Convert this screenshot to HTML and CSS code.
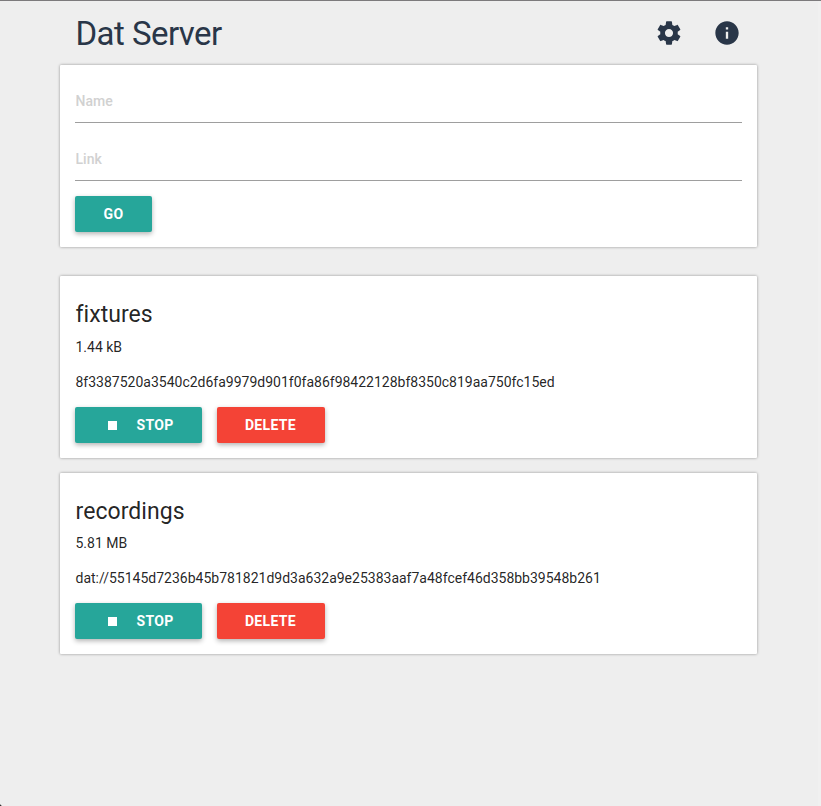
FILE: index.html
```html
<!DOCTYPE html>
<html lang="en">
<head>
<meta charset="utf-8">
<title>Dat Server</title>
<link rel="stylesheet" href="styles.css">
</head>
<body>
<div class="container">
  <header class="header">
    <h1>Dat Server</h1>
    <nav class="nav">
      <svg class="icon" viewBox="0 0 24 24"><path d="M19.43 12.98c.04-.32.07-.64.07-.98s-.03-.66-.07-.98l2.11-1.65c.19-.15.24-.42.12-.64l-2-3.46c-.12-.22-.39-.3-.61-.22l-2.49 1c-.52-.4-1.08-.73-1.69-.98l-.38-2.65C14.46 2.18 14.25 2 14 2h-4c-.25 0-.46.18-.49.42l-.38 2.65c-.61.25-1.17.59-1.69.98l-2.49-1c-.23-.09-.49 0-.61.22l-2 3.46c-.13.22-.07.49.12.64l2.11 1.65c-.04.32-.07.65-.07.98s.03.66.07.98l-2.11 1.65c-.19.15-.24.42-.12.64l2 3.46c.12.22.39.3.61.22l2.49-1c.52.4 1.08.73 1.69.98l.38 2.65c.03.24.24.42.49.42h4c.25 0 .46-.18.49-.42l.38-2.65c.61-.25 1.17-.59 1.69-.98l2.49 1c.23.09.49 0 .61-.22l2-3.46c.12-.22.07-.49-.12-.64l-2.11-1.65zM12 15.5c-1.93 0-3.5-1.57-3.5-3.5s1.57-3.5 3.5-3.5 3.5 1.57 3.5 3.5-1.57 3.5-3.5 3.5z"/></svg>
      <svg class="icon" viewBox="0 0 24 24"><path d="M12 2C6.48 2 2 6.48 2 12s4.48 10 10 10 10-4.48 10-10S17.52 2 12 2zm1 15h-2v-6h2v6zm0-8h-2V7h2v2z"/></svg>
    </nav>
  </header>
  <form class="card form">
    <input class="field" type="text" placeholder="Name">
    <input class="field" type="text" placeholder="Link">
    <button class="btn go" type="button">Go</button>
  </form>
  <section class="card dat">
    <h2>fixtures</h2>
    <p class="size">1.44 kB</p>
    <p class="link">8f3387520a3540c2d6fa9979d901f0fa86f98422128bf8350c819aa750fc15ed</p>
    <div class="actions">
      <button class="btn stop" type="button"><span class="square"></span>Stop</button>
      <button class="btn delete" type="button">Delete</button>
    </div>
  </section>
  <section class="card dat second">
    <h2>recordings</h2>
    <p class="size">5.81 MB</p>
    <p class="link">dat://55145d7236b45b781821d9d3a632a9e25383aaf7a48fcef46d358bb39548b261</p>
    <div class="actions">
      <button class="btn stop" type="button"><span class="square"></span>Stop</button>
      <button class="btn delete" type="button">Delete</button>
    </div>
  </section>
</div>
</body>
</html>
```
FILE: styles.css
```css
* { box-sizing: border-box; }
body {
  margin: 0;
  min-height: 806px;
  background: radial-gradient(circle at 0 100%, #333 0.8px, transparent 2px), linear-gradient(to left, #f0f0f0 3px, #eee 3px);
  border-top: 1px solid #7c7a7c;
  font-family: Roboto, sans-serif;
  font-size: 14px;
  color: rgba(0, 0, 0, 0.87);
}
.container { width: 697px; margin-left: 60px; }
.header {
  display: flex;
  justify-content: space-between;
  height: 64px;
  padding: 0 16px 0 15.5px;
  color: #293648;
}
h1 { margin: 0; font-size: 33px; font-weight: 400; line-height: 66px; letter-spacing: -0.55px; }
.nav { display: flex; gap: 30px; padding-top: 18px; }
.icon { width: 28px; height: 28px; fill: currentColor; }
.card {
  background: #fff;
  border-radius: 1px;
  box-shadow: 0 0 3px rgba(0, 0, 0, 0.4);
  padding: 0 15px;
}
.form { height: 182px; margin-bottom: 29px; padding-top: 15px; }
.field {
  display: block;
  width: 100%;
  height: 43px;
  margin: 0 0 15px;
  padding: 0 0 0 0.5px;
  border: 0;
  border-bottom: 1px solid #9e9e9e;
  background: transparent;
  font: 500 14px Roboto, sans-serif;
}
.field::placeholder { color: #d1d1d1; opacity: 1; }
.btn {
  height: 36px;
  padding: 0;
  border: 0;
  border-radius: 2px;
  background: #26a69a;
  box-shadow: 0 2px 5px rgba(0, 0, 0, 0.3);
  color: #fff;
  font: 700 14px/36px Roboto, sans-serif;
  letter-spacing: 0.35px;
  text-transform: uppercase;
}
.go { width: 77px; }
.dat { height: 182px; padding-top: 23px; margin-bottom: 15px; }
.second { height: 181px; }
h2 { margin: 0 0 0 0.5px; font-size: 23px; font-weight: 400; line-height: 32px; letter-spacing: 0.05px; }
p { margin: 0 0 0 0.5px; line-height: 20px; }
.size { margin-top: 6px; }
.second .size { margin-top: 5px; }
.link { margin-top: 15px; }
.actions { display: flex; gap: 15px; margin-top: 15px; }
.stop { width: 127px; display: flex; align-items: center; padding-left: 33px; }
.square { width: 9px; height: 9px; margin-right: 19.5px; background: #fff; }
.delete { width: 108px; padding-right: 1px; background: #f44336; }
```
